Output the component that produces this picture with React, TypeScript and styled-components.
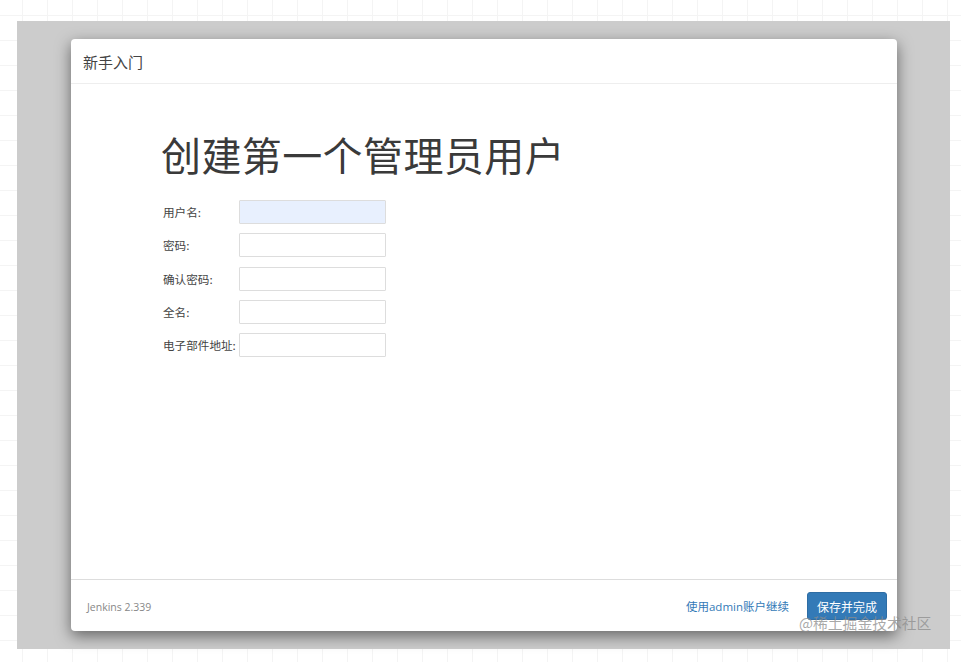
import React from "react";
import styled, { createGlobalStyle } from "styled-components";

const Global = createGlobalStyle`
  html, body { margin: 0; padding: 0; }
  body {
    width: 961px;
    height: 662px;
    overflow: hidden;
    font-family: "Open Sans", "Noto Sans CJK SC", sans-serif;
    color: #333;
    background-color: #fff;
    background-image:
      linear-gradient(to right, #f4f4f4 1px, transparent 1px),
      linear-gradient(to bottom, #f4f4f4 1px, transparent 1px);
    background-size: 25px 25px;
    background-position: 22px 15px;
  }
`;

const Page = styled.div`
  position: relative;
  padding: 21px 11px 13px 17px;
`;

const Backdrop = styled.div`
  width: 933px;
  height: 628px;
  background: #cccccc;
  padding: 18px 0 0 54px;
  box-sizing: border-box;
`;

const Modal = styled.div`
  width: 826px;
  height: 592px;
  background: #fff;
  border-radius: 4px;
  box-shadow: 0 5px 15px rgba(0, 0, 0, 0.5);
  display: flex;
  flex-direction: column;
  overflow: hidden;
`;

const Header = styled.div`
  height: 45px;
  box-sizing: border-box;
  border-bottom: 1px solid #eeeeee;
  padding: 0 12px;
  display: flex;
  align-items: center;
  font-size: 15px;
  color: #444;
`;

const Body = styled.div`
  flex: 1;
  padding: 44px 0 0 90px;
`;

const Title = styled.h1`
  margin: 0 0 20px 0;
  font-family: "Noto Sans CJK SC", sans-serif;
  font-size: 40px;
  font-weight: 400;
  line-height: 52px;
  color: #3a3a3a;
  letter-spacing: 0.4px;
`;

const Form = styled.div`
  display: grid;
  grid-template-columns: 76px 147px;
  row-gap: 9.3px;
  padding-left: 2px;
`;

const Label = styled.label`
  font-size: 11.6px;
  line-height: 24px;
  color: #444;
  font-family: "Noto Sans CJK SC", sans-serif;
  white-space: nowrap;
`;

const Input = styled.input<{ $autofill?: boolean }>`
  width: 147px;
  height: 24px;
  box-sizing: border-box;
  border: 1px solid #dddddd;
  border-radius: 1px;
  background: ${(p) => (p.$autofill ? "#e8f0fe" : "#fff")};
  margin: 0;
  padding: 2px 4px;
  outline: none;
`;

const Footer = styled.div`
  height: 52px;
  box-sizing: border-box;
  border-top: 1px solid #dddddd;
  display: flex;
  align-items: center;
  padding: 0 10px 0 16px;
  font-size: 12px;
`;

const Version = styled.span`
  color: #888;
  font-size: 10.5px;
  margin-top: 2px;
`;

const Spacer = styled.div`
  flex: 1;
`;

const LinkText = styled.a`
  color: #337ab7;
  font-size: 11.5px;
  font-family: "Open Sans", "Noto Sans CJK SC", sans-serif;
  text-decoration: none;
  margin-right: 18px;
  margin-top: 1px;
`;

const Button = styled.button`
  width: 80px;
  height: 28px;
  background: #337ab7;
  border: 1px solid #2e6da4;
  border-radius: 3px;
  color: #fff;
  font-size: 12px;
  font-family: "Noto Sans CJK SC", sans-serif;
  padding: 0;
  margin-top: 1px;
`;

const Watermark = styled.div`
  position: absolute;
  left: 799px;
  top: 612px;
  font-size: 14.8px;
  color: rgba(140, 140, 140, 0.75);
  font-family: "Noto Sans CJK SC", sans-serif;
  white-space: nowrap;
  pointer-events: none;
`;

const fields = [
  { label: "用户名:", autofill: true },
  { label: "密码:" },
  { label: "确认密码:" },
  { label: "全名:" },
  { label: "电子部件地址:" },
];

export default function App() {
  return (
    <>
      <Global />
      <Page>
        <Backdrop>
          <Modal>
            <Header>新手入门</Header>
            <Body>
              <Title>创建第一个管理员用户</Title>
              <Form>
                {fields.map((f) => (
                  <React.Fragment key={f.label}>
                    <Label>{f.label}</Label>
                    <Input $autofill={f.autofill} type="text" readOnly />
                  </React.Fragment>
                ))}
              </Form>
            </Body>
            <Footer>
              <Version>Jenkins 2.339</Version>
              <Spacer />
              <LinkText>使用admin账户继续</LinkText>
              <Button>保存并完成</Button>
            </Footer>
          </Modal>
        </Backdrop>
        <Watermark>@稀土掘金技术社区</Watermark>
      </Page>
    </>
  );
}
